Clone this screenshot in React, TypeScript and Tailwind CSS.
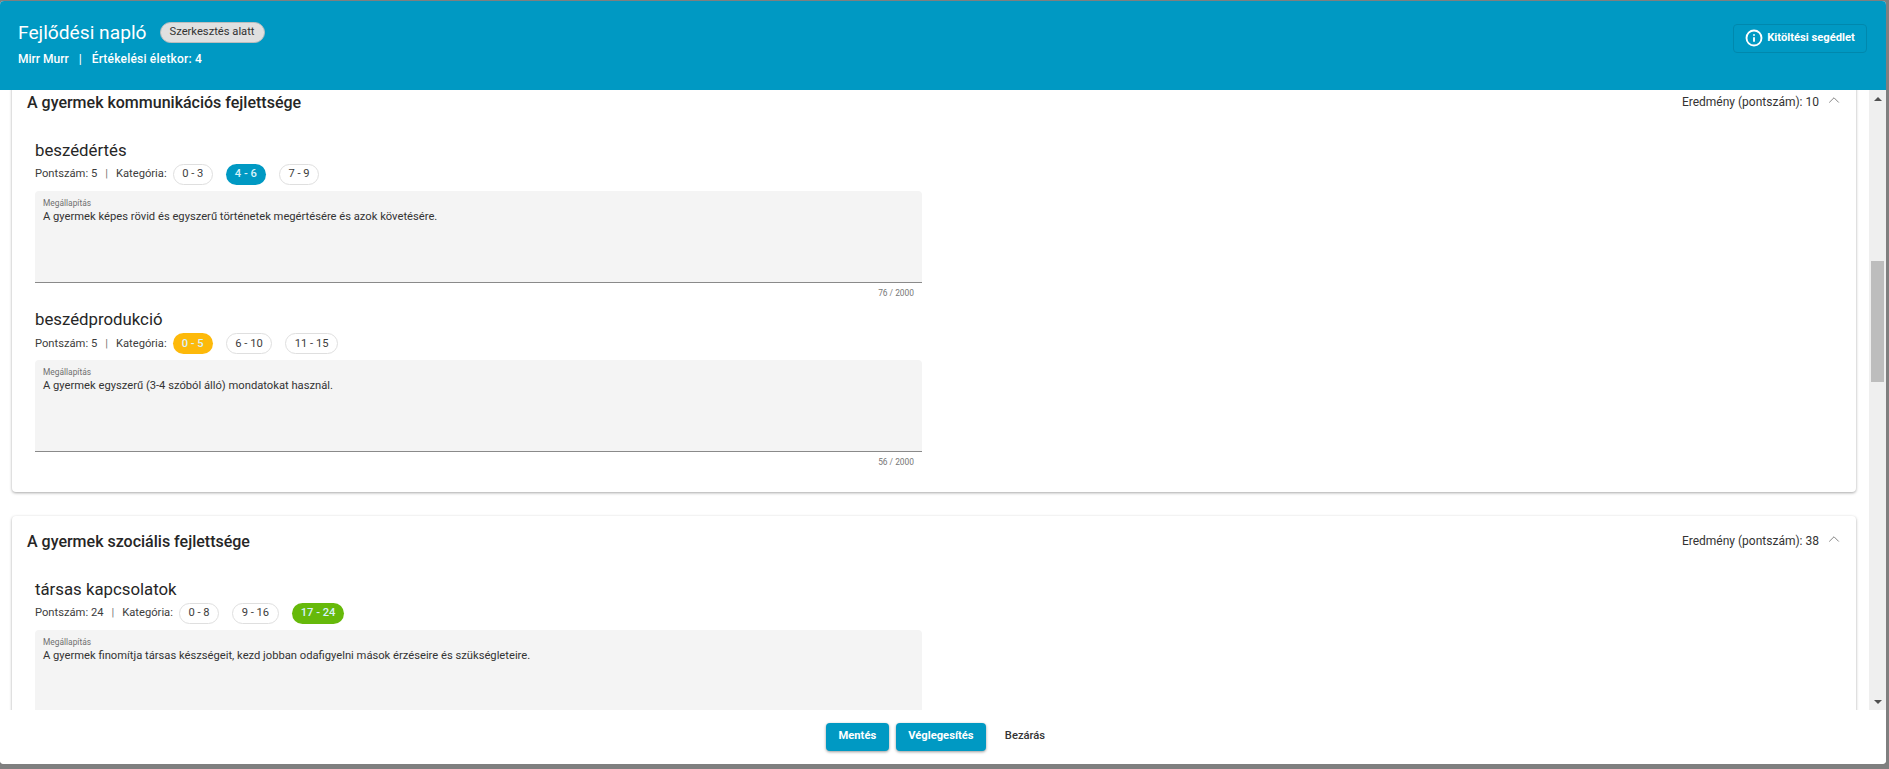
import { ChevronUp, Info } from "lucide-react"

interface Range {
  label: string
  color?: string
}

interface Finding {
  name: string
  score: number
  ranges: Range[]
  text: string
  count?: number
}

const sections: { title: string; total: number; height: string; items: Finding[] }[] = [
  {
    title: "A gyermek kommunikációs fejlettsége",
    total: 10,
    height: "h-[415px]",
    items: [
      {
        name: "beszédértés",
        score: 5,
        ranges: [{ label: "0 - 3" }, { label: "4 - 6", color: "bg-[#0099c3]" }, { label: "7 - 9" }],
        text: "A gyermek képes rövid és egyszerű történetek megértésére és azok követésére.",
        count: 76,
      },
      {
        name: "beszédprodukció",
        score: 5,
        ranges: [{ label: "0 - 5", color: "bg-[#fdb90a]" }, { label: "6 - 10" }, { label: "11 - 15" }],
        text: "A gyermek egyszerű (3-4 szóból álló) mondatokat használ.",
        count: 56,
      },
    ],
  },
  {
    title: "A gyermek szociális fejlettsége",
    total: 38,
    height: "h-[300px]",
    items: [
      {
        name: "társas kapcsolatok",
        score: 24,
        ranges: [{ label: "0 - 8" }, { label: "9 - 16" }, { label: "17 - 24", color: "bg-[#66b90a]" }],
        text: "A gyermek finomítja társas készségeit, kezd jobban odafigyelni mások érzéseire és szükségleteire.",
      },
    ],
  },
]

function RangeChip({ label, color }: Range) {
  if (color) {
    return (
      <span className={`flex h-[21px] items-center rounded-full px-[9px] pt-px text-[11.2px] font-medium text-[#d8f3fb] ${color}`}>
        {label}
      </span>
    )
  }
  return (
    <span className="flex h-[21px] items-center rounded-full border border-[#dfdfdf] px-[8.5px] pt-px text-[11.2px] text-[#3d3d3d]">
      {label}
    </span>
  )
}

function FindingBlock({ item }: { item: Finding }) {
  return (
    <div className="h-[169.5px]">
      <h3 className="h-6 text-[16.8px] leading-6 text-[#262626]">{item.name}</h3>
      <div className="mt-[2px] flex items-center text-[11.2px] text-[#3d3d3d]">
        <span className="pt-px">Pontszám: {item.score}</span>
        <span className="mx-[8px] pt-px text-[#777]">|</span>
        <span className="mr-[6px] pt-px">Kategória:</span>
        <div className="flex gap-[13px]">
          {item.ranges.map((r) => (
            <RangeChip key={r.label} {...r} />
          ))}
        </div>
      </div>
      <div className="mt-[6px] h-[92px] w-[887px] rounded-t border-b border-[#8a8a8a] bg-[#f4f4f4] px-2 pt-[7px]">
        <div className="text-[8.4px] leading-[11px] text-[#6f6f6f]">Megállapítás</div>
        <div className="text-[11.2px] leading-[15px] text-[#333]">{item.text}</div>
      </div>
      {item.count !== undefined && (
        <div className="mt-[4px] w-[879px] text-right text-[8.4px] leading-3 text-[#777]">{item.count} / 2000</div>
      )}
    </div>
  )
}

export default function App() {
  return (
    <div className="flex h-screen flex-col bg-[#7f7f7f] pt-[1px] pr-[3px] pb-[5px] font-['Roboto',sans-serif]">
      <div className="flex min-h-0 flex-1 flex-col overflow-hidden rounded bg-white">
        <header className="flex h-[89px] shrink-0 items-center justify-between bg-[#0099c3] pr-[19px] pl-[18px]">
          <div className="-mt-[6px]">
            <div className="flex items-center">
              <h1 className="text-[19.2px] leading-7 text-white">Fejlődési napló</h1>
              <span className="ml-[13px] flex h-[21px] items-center rounded-full border border-[#bdbdbd] bg-[#e0e0e0] px-[9px] text-[11.2px] text-[#333]">
                Szerkesztés alatt
              </span>
            </div>
            <div className="mt-[4px] flex text-xs font-medium text-white">
              <span>Mirr Murr</span>
              <span className="mx-[10px]">|</span>
              <span className="tracking-[0.2px]">Értékelési életkor: 4</span>
            </div>
          </div>
          <button className="-mt-[15px] flex h-[29px] w-[134px] items-center justify-center gap-[4px] rounded border border-[#0088ad] text-[11.2px] font-bold text-white">
            <Info size={18} strokeWidth={2.5} />
            Kitöltési segédlet
          </button>
        </header>

        <div className="flex min-h-0 flex-1">
          <div className="min-w-0 flex-1 overflow-hidden pr-[13px] pl-3">
            {/* scrolled part of the list */}
            <div className="-mt-[13px] flex flex-col gap-6">
              {sections.map((s) => (
                <section key={s.title} className={`shrink-0 rounded bg-white shadow-[0_1px_3px_rgba(0,0,0,0.35)] ${s.height}`}>
                  <div className="flex h-[50px] items-center justify-between pr-[13px] pl-[15px]">
                    <h2 className="mt-[1px] text-base font-medium text-[#262626]">{s.title}</h2>
                    <div className="flex items-center gap-[6px] text-xs text-[#333]">
                      <span>Eredmény (pontszám): {s.total}</span>
                      <ChevronUp size={18} strokeWidth={1.2} className="-mt-[4px] text-[#777]" />
                    </div>
                  </div>
                  <div className="pt-[10.5px] pl-[23px]">
                    {s.items.map((item) => (
                      <FindingBlock key={item.name} item={item} />
                    ))}
                  </div>
                </section>
              ))}
            </div>
          </div>
          <div className="flex w-[17px] shrink-0 flex-col bg-[#efefef]">
            <div className="flex h-[17px] items-center justify-center">
              <div className="h-0 w-0 border-x-[4px] border-b-[4px] border-x-transparent border-b-[#505050]" />
            </div>
            <div className="mx-[2px] mt-[154px] h-[121px] bg-[#bdbdbd]" />
            <div className="flex-1" />
            <div className="flex h-[17px] items-center justify-center">
              <div className="h-0 w-0 border-x-[4px] border-t-[4px] border-x-transparent border-t-[#505050]" />
            </div>
          </div>
        </div>

        <footer className="flex h-[54px] shrink-0 items-center justify-center gap-[7px] bg-white pr-[11px] pb-[1px]">
          <button className="h-[28px] w-[63px] rounded bg-[#0099c3] text-[11.2px] font-bold text-white shadow-[0_1px_3px_rgba(0,0,0,0.4)]">Mentés</button>
          <button className="h-[28px] w-[90px] rounded bg-[#0099c3] text-[11.2px] font-bold text-white shadow-[0_1px_3px_rgba(0,0,0,0.4)]">Véglegesítés</button>
          <button className="ml-[8px] h-[28px] px-1 text-[11.2px] font-medium text-[#333]">Bezárás</button>
        </footer>
      </div>
    </div>
  )
}
